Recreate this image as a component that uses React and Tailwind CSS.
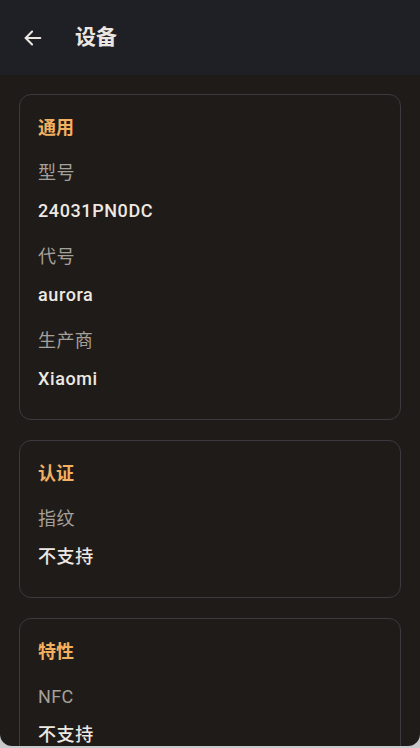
import React from 'react';

const sections = [
  {
    title: '通用',
    items: [
      { label: '型号', value: '24031PN0DC' },
      { label: '代号', value: 'aurora' },
      { label: '生产商', value: 'Xiaomi' },
    ],
  },
  {
    title: '认证',
    items: [{ label: '指纹', value: '不支持' }],
  },
  {
    title: '特性',
    items: [{ label: 'NFC', value: '不支持' }],
  },
];

function Section({ title, items }) {
  return (
    <div className="rounded-[12px] border border-[#3c3a41] px-[18px] pt-[21px] pb-[28px]">
      <div className="h-6 text-[18px] leading-6 font-bold text-[#f3b060]">{title}</div>
      {items.map((item, idx) => (
        <div key={item.label} className={idx === 0 ? 'mt-[21px]' : 'mt-[22px]'}>
          <div className="h-6 text-[18px] leading-6 tracking-[0.4px] text-[#a6a09a]">{item.label}</div>
          <div className="mt-[14px] h-6 text-[18px] leading-6 font-medium tracking-[0.6px] text-[#eee8e2]">{item.value}</div>
        </div>
      ))}
    </div>
  );
}

export default function App() {
  return (
    <div
      className="h-[748px] w-[420px] overflow-hidden bg-[#c9c9cb]"
      style={{ fontFamily: "Roboto, 'Noto Sans CJK SC', sans-serif" }}
    >
      <div className="flex h-[746px] flex-col overflow-hidden rounded-b-[12px] bg-[#1f1b18]">
        {/* Top bar */}
        <div className="flex h-[75px] shrink-0 items-center bg-[#1f1f26] pl-[22px]">
          <svg width="22" height="22" viewBox="0 0 24 24" fill="none" stroke="#ece6e0" strokeWidth="2.2" strokeLinecap="round" strokeLinejoin="round">
            <path d="M20 12H4" />
            <path d="M11 5l-7 7 7 7" />
          </svg>
          <span className="ml-[31px] text-[21px] font-bold text-[#ece6e0]">设备</span>
        </div>
        {/* Content */}
        <div className="flex flex-col gap-[20px] px-[19px] pt-[19px]">
          {sections.map(s => (
            <Section key={s.title} title={s.title} items={s.items} />
          ))}
        </div>
      </div>
    </div>
  );
}
